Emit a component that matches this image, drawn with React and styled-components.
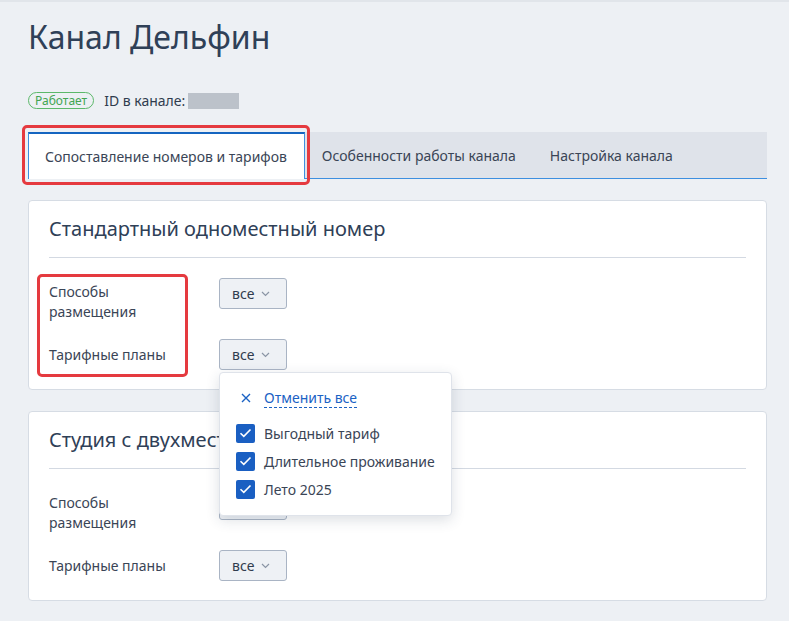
import React from 'react';
import styled, { createGlobalStyle, css } from 'styled-components';

const GlobalStyle = createGlobalStyle`
  * {
    box-sizing: border-box;
    margin: 0;
    padding: 0;
  }
  body {
    background: #edf0f4;
    font-family: "Noto Sans", "Open Sans", sans-serif;
    color: #303c4e;
  }
`;

const Page = styled.div`
  min-height: 621px;
  border-top: 2px solid #e1e5ea;
  padding: 13px 22px 20px 28px;
`;

const Title = styled.h1`
  font-size: 32px;
  font-weight: 400;
  line-height: 44px;
  color: #2f4057;
`;

const StatusRow = styled.div`
  display: flex;
  align-items: center;
  gap: 10px;
  margin-top: 32px;
  font-size: 14px;
`;

const Badge = styled.span`
  display: inline-flex;
  align-items: center;
  height: 17px;
  padding: 0 6px;
  border: 1px solid #5cb86a;
  border-radius: 9px;
  color: #43a552;
  font-size: 12px;
`;

const IdLabel = styled.span`
  display: flex;
  align-items: center;
  gap: 3px;
  color: #303c4e;
`;

const Hidden = styled.span`
  display: inline-block;
  width: 51px;
  height: 16px;
  background: #bcc2ca;
`;

const Tabs = styled.div`
  display: flex;
  margin-top: 22px;
  height: 47px;
  background: #dfe3ea;
  border-bottom: 1px solid #3d8fe0;
`;

const Tab = styled.div`
  position: relative;
  display: flex;
  align-items: center;
  padding: 0 17px;
  font-size: 14px;
  color: #3a4556;
  ${p => p.active && css`
    background: #fff;
    border-top: 2px solid #1565c0;
    border-left: 1px solid #3d8fe0;
    border-right: 1px solid #3d8fe0;
    margin-bottom: -1px;
    padding: 0 17px 0 16px;
    &::after {
      content: '';
      position: absolute;
      top: -9px;
      left: -7px;
      right: -6px;
      bottom: -6px;
      border: 3px solid #e53a3f;
      border-radius: 5px;
    }
  `}
`;

const Card = styled.section`
  position: relative;
  margin-top: 21px;
  background: #fff;
  border: 1px solid #d6dce4;
  border-radius: 4px;
  padding: 14px 20px 19px 20px;
  height: 190px;
`;

const CardTitle = styled.h2`
  font-size: 20px;
  font-weight: 400;
  line-height: 28px;
  color: #2f4057;
  padding-bottom: 14px;
  border-bottom: 1px solid #d3d9e2;
`;

const Fields = styled.div`
  position: relative;
  display: grid;
  grid-template-columns: 170px auto;
  justify-content: start;
  row-gap: 17px;
  margin-top: 20px;
  ${p => p.marked && css`
    &::before {
      content: '';
      position: absolute;
      top: -4px;
      left: -12px;
      width: 145px;
      height: 97px;
      border: 3px solid #e53a3f;
      border-radius: 5px;
    }
  `}
`;

const Label = styled.div`
  font-size: 14px;
  line-height: 20px;
  color: #3a4556;
  padding-top: ${p => (p.single ? '6px' : '4px')};
`;

const Control = styled.div`
  position: relative;
`;

const SelectButton = styled.button`
  display: inline-flex;
  align-items: center;
  gap: 7px;
  height: 31px;
  width: 68px;
  padding: 0 12px;
  background: #eef1f5;
  border: 1px solid #a9b4c4;
  border-radius: 3px;
  font-family: inherit;
  font-size: 14px;
  color: #303c4e;
`;

const Menu = styled.div`
  position: absolute;
  top: 33px;
  left: 0;
  z-index: 5;
  width: 233px;
  height: 144px;
  background: #fff;
  border: 1px solid #dfe3ea;
  border-radius: 4px;
  box-shadow: 0 4px 14px rgba(40, 55, 80, 0.16);
  padding: 13px 16px 0 16px;
`;

const ClearRow = styled.div`
  display: flex;
  align-items: center;
  gap: 13px;
  height: 24px;
  padding-left: 5px;
  margin-bottom: 9px;
  color: #1b62c4;
  font-size: 14px;
`;

const ClearText = styled.span`
  border-bottom: 1px dashed #1b62c4;
  line-height: 18px;
`;

const Option = styled.label`
  display: flex;
  align-items: center;
  gap: 9px;
  height: 28px;
  font-size: 14px;
  color: #3a4556;
`;

const Box = styled.span`
  display: inline-flex;
  align-items: center;
  justify-content: center;
  width: 19px;
  height: 19px;
  background: #1a5fc2;
  border-radius: 2px;
`;

const Chevron = () => (
  <svg width="9" height="6" viewBox="0 0 9 6" fill="none">
    <path d="M1 1l3.5 3.5L8 1" stroke="#8a95a5" strokeWidth="1.2" />
  </svg>
);

const Check = () => (
  <svg width="13" height="10" viewBox="0 0 13 10" fill="none">
    <path d="M1.5 5.2l3.3 3.2L11.5 1.5" stroke="#fff" strokeWidth="1.6" />
  </svg>
);

const Cross = () => (
  <svg width="10" height="10" viewBox="0 0 10 10" fill="none">
    <path d="M1 1l8 8M9 1L1 9" stroke="#1b62c4" strokeWidth="1.4" />
  </svg>
);

const tarifs = ['Выгодный тариф', 'Длительное проживание', 'Лето 2025'];

const rooms = [
  { id: 1, nome: 'Стандартный одноместный номер', marked: true, open: true },
  { id: 2, nome: 'Студия с двухместной кроватью' },
];

function Dropdown() {
  return (
    <Menu>
      <ClearRow>
        <Cross />
        <ClearText>Отменить все</ClearText>
      </ClearRow>
      {tarifs.map(t => (
        <Option key={t}>
          <Box><Check /></Box>
          {t}
        </Option>
      ))}
    </Menu>
  );
}

export default function App() {
  return (
    <Page>
      <GlobalStyle />
      <Title>Канал Дельфин</Title>

      <StatusRow>
        <Badge>Работает</Badge>
        <IdLabel>ID в канале: <Hidden /></IdLabel>
      </StatusRow>

      <Tabs>
        <Tab active>Сопоставление номеров и тарифов</Tab>
        <Tab>Особенности работы канала</Tab>
        <Tab>Настройка канала</Tab>
      </Tabs>

      {rooms.map(r => (
        <Card key={r.id}>
          <CardTitle>{r.nome}</CardTitle>
          <Fields marked={r.marked}>
            <Label>Способы<br />размещения</Label>
            <Control>
              <SelectButton>все <Chevron /></SelectButton>
            </Control>
            <Label single>Тарифные планы</Label>
            <Control>
              <SelectButton>все <Chevron /></SelectButton>
              {r.open && <Dropdown />}
            </Control>
          </Fields>
        </Card>
      ))}
    </Page>
  );
}
